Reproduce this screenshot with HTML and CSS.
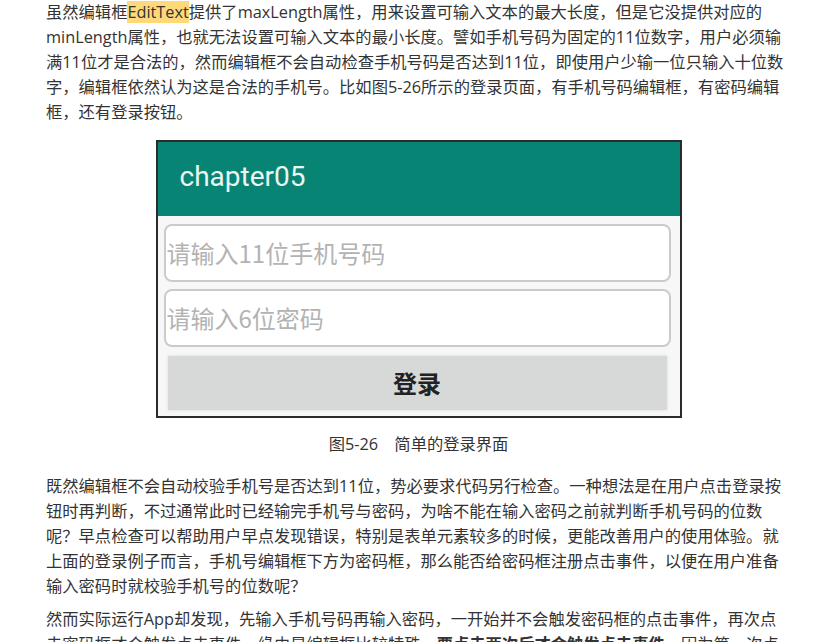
FILE: index.html
```html
<!DOCTYPE html>
<html lang="zh-CN">

<head>
    <meta charset="UTF-8">
    <meta name="viewport" content="width=device-width, initial-scale=1.0">
    <title>编辑框</title>
    <link rel="stylesheet" href="styles.css">
</head>

<body>
    <div class="page">
        <p class="para">虽然编辑框<span class="mark">EditText</span>提供了maxLength属性，用来设置可输入文本的最大长度，但是它没提供对应的minLength属性，也就无法设置可输入文本的最小长度。譬如手机号码为固定的11位数字，用户必须输满11位才是合法的，然而编辑框不会自动检查手机号码是否达到11位，即使用户少输一位只输入十位数字，编辑框依然认为这是合法的手机号。比如图5-26所示的登录页面，有手机号码编辑框，有密码编辑框，还有登录按钮。</p>

        <div class="figure">
            <div class="phone">
                <div class="appbar">chapter05</div>
                <div class="form">
                    <div class="field">请输入11位手机号码</div>
                    <div class="field">请输入6位密码</div>
                    <div class="login">登录</div>
                </div>
            </div>
            <p class="caption">图5-26　简单的登录界面</p>
        </div>

        <p class="para">既然编辑框不会自动校验手机号是否达到11位，势必要求代码另行检查。一种想法是在用户点击登录按钮时再判断，不过通常此时已经输完手机号与密码，为啥不能在输入密码之前就判断手机号码的位数呢？早点检查可以帮助用户早点发现错误，特别是表单元素较多的时候，更能改善用户的使用体验。就上面的登录例子而言，手机号编辑框下方为密码框，那么能否给密码框注册点击事件，以便在用户准备输入密码时就校验手机号的位数呢？</p>

        <p class="para">然而实际运行App却发现，先输入手机号码再输入密码，一开始并不会触发密码框的点击事件，再次点击密码框才会触发点击事件，缘由是编辑框比较特殊，<b>要点击两次后才会触发点击事件</b>，因为第一次点击只触发焦点变更事件，第二次点击才触发点击事件。</p>
    </div>
</body>

</html>
```

FILE: styles.css
```css
* {
    margin: 0;
    padding: 0;
    box-sizing: border-box;
}

body {
    background-color: #ffffff;
    color: #333333;
    font-family: "Open Sans", "Noto Sans CJK SC", sans-serif;
    font-size: 16.3px;
    line-height: 25px;
    overflow: hidden;
}

.page {
    width: 745px;
    margin-left: 46px;
}

.para {
    margin-bottom: 8px;
}

.mark {
    background-color: #fdd97a;
}

.figure {
    margin-top: 15px;
    margin-bottom: 17px;
}

.phone {
    width: 526px;
    height: 278px;
    margin: 0 auto;
    border: 2px solid #2b2b2b;
    background-color: #f7f7f7;
    display: flex;
    flex-direction: column;
}

.appbar {
    height: 74px;
    background-color: #078473;
    color: #eaf6f2;
    font-family: Roboto, "Noto Sans", sans-serif;
    font-size: 28px;
    line-height: 70px;
    padding-left: 22px;
}

.form {
    flex: 1;
    display: flex;
    flex-direction: column;
    gap: 7px;
    padding: 8px 9px 6px 6px;
}

.field {
    height: 58px;
    background-color: #ffffff;
    border: 2px solid #cbcbcb;
    border-radius: 8px;
    color: #b3b3b3;
    font-family: "Noto Sans CJK SC", sans-serif;
    font-size: 24px;
    line-height: 54px;
    padding-left: 1px;
}

.login {
    height: 54px;
    margin: 2px 4px 0 4px;
    background-color: #d7d8d8;
    box-shadow: 0 0 3px rgba(0, 0, 0, 0.12);
    color: #222222;
    font-family: "Noto Sans CJK SC", sans-serif;
    font-weight: bold;
    font-size: 24px;
    line-height: 54px;
    text-align: center;
}

.caption {
    text-align: center;
    margin-top: 14px;
}
```
